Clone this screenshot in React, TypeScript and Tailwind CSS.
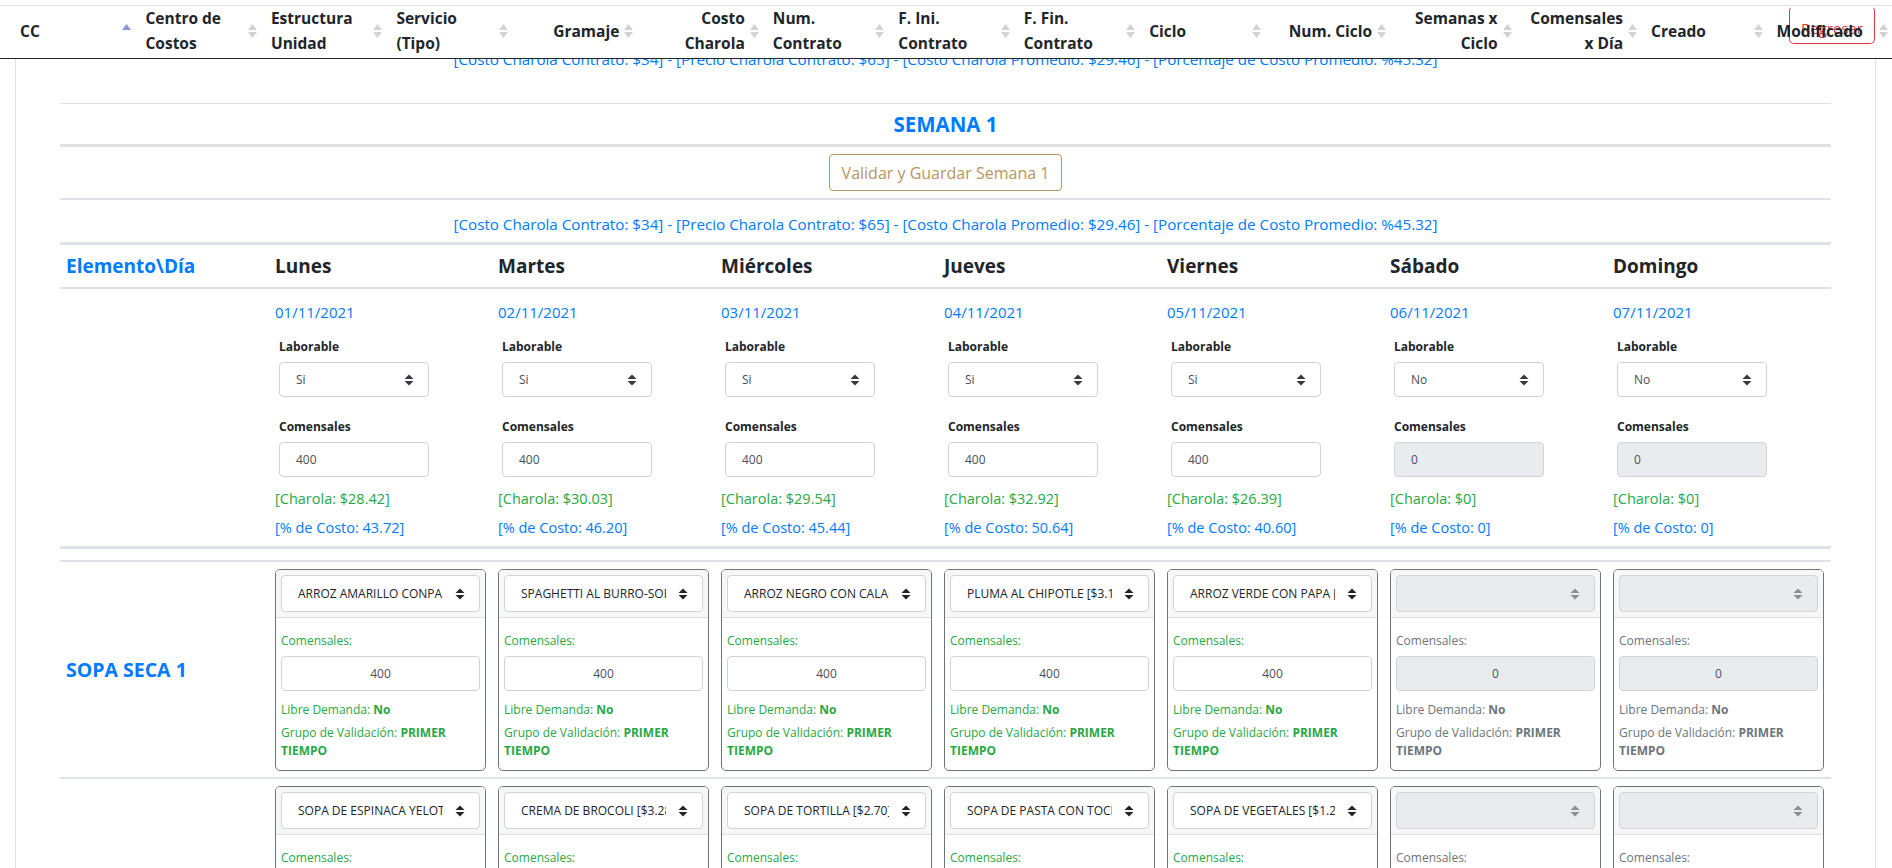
import React from "react";

const STATS =
  "[Costo Charola Contrato: $34] - [Precio Charola Contrato: $65] - [Costo Charola Promedio: $29.46] - [Porcentaje de Costo Promedio: %45.32]";

type Col = { l: string[]; r?: boolean; active?: boolean };
const cols: Col[] = [
  { l: ["CC"], active: true },
  { l: ["Centro de", "Costos"] },
  { l: ["Estructura", "Unidad"] },
  { l: ["Servicio", "(Tipo)"] },
  { l: ["Gramaje"], r: true },
  { l: ["Costo", "Charola"], r: true },
  { l: ["Num.", "Contrato"] },
  { l: ["F. Ini.", "Contrato"] },
  { l: ["F. Fin.", "Contrato"] },
  { l: ["Ciclo"] },
  { l: ["Num. Ciclo"], r: true },
  { l: ["Semanas x", "Ciclo"], r: true },
  { l: ["Comensales", "x Día"], r: true },
  { l: ["Creado"] },
  { l: ["Modificado"] },
];

type Day = {
  name: string;
  date: string;
  lab: string;
  com: string;
  charola: string;
  pct: string;
  on: boolean;
};
const days: Day[] = [
  { name: "Lunes", date: "01/11/2021", lab: "Si", com: "400", charola: "$28.42", pct: "43.72", on: true },
  { name: "Martes", date: "02/11/2021", lab: "Si", com: "400", charola: "$30.03", pct: "46.20", on: true },
  { name: "Miércoles", date: "03/11/2021", lab: "Si", com: "400", charola: "$29.54", pct: "45.44", on: true },
  { name: "Jueves", date: "04/11/2021", lab: "Si", com: "400", charola: "$32.92", pct: "50.64", on: true },
  { name: "Viernes", date: "05/11/2021", lab: "Si", com: "400", charola: "$26.39", pct: "40.60", on: true },
  { name: "Sábado", date: "06/11/2021", lab: "No", com: "0", charola: "$0", pct: "0", on: false },
  { name: "Domingo", date: "07/11/2021", lab: "No", com: "0", charola: "$0", pct: "0", on: false },
];

const row1 = [
  "ARROZ AMARILLO CONPAPA [$2.10]",
  "SPAGHETTI AL BURRO-SOFRITO [$3.00]",
  "ARROZ NEGRO CON CALAMAR [$4.20]",
  "PLUMA AL CHIPOTLE [$3.15]",
  "ARROZ VERDE CON PAPA [$2.45]",
];
const row2 = [
  "SOPA DE ESPINACA YELOTE [$1.90]",
  "CREMA DE BROCOLI [$3.28]",
  "SOPA DE TORTILLA [$2.70]",
  "SOPA DE PASTA CON TOCINO [$2.10]",
  "SOPA DE VEGETALES [$1.24]",
];

function SortIcon({ active }: { active?: boolean }) {
  return (
    <svg
      width="9"
      height="15"
      viewBox="0 0 9 15"
      className="absolute right-[4px] top-1/2 -translate-y-1/2"
    >
      {active ? (
        <path d="M0 6.5 L4.5 0.5 L9 6.5 Z" fill="#8d95da" />
      ) : (
        <>
          <path d="M0 6.5 L4.5 0.5 L9 6.5 Z" fill="#d3d3d3" />
          <path d="M0 8.5 L4.5 14.5 L9 8.5 Z" fill="#d3d3d3" />
        </>
      )}
    </svg>
  );
}

function SelArrow({ color = "#343a40" }: { color?: string }) {
  return (
    <svg width="10" height="12" viewBox="0 0 10 12" className="shrink-0">
      <path d="M0.5 5 L5 0.5 L9.5 5 Z" fill={color} />
      <path d="M0.5 7 L5 11.5 L9.5 7 Z" fill={color} />
    </svg>
  );
}

function Header() {
  return (
    <div className="relative z-10 h-[59px] pt-[5px] bg-white border-b border-[#212529]">
      <div className="absolute left-[1789px] top-[6px] w-[86px] h-[38px] pt-[7px] rounded-[5px] border border-[#dc3545] border-t-transparent flex items-center justify-center text-[#dc3545] text-[15px]">
        Regresar
      </div>
      <div className="border-t border-[#dee2e6]">
        <div className="grid grid-cols-[repeat(15,minmax(0,1fr))] pl-[10px] h-[44px]">
          {cols.map((c, i) => (
            <div
              key={i}
              className={
                "relative flex items-center pl-[10px] pr-[18px] text-[15.5px] leading-[25px] font-bold text-[#212529] " +
                (c.r ? "justify-end text-right" : "justify-start text-left")
              }
            >
              <div className="whitespace-nowrap">
                {c.l.map((t, j) => (
                  <div key={j}>{t}</div>
                ))}
              </div>
              <SortIcon active={c.active} />
            </div>
          ))}
        </div>
      </div>
    </div>
  );
}

function DayCell({ d }: { d: Day }) {
  return (
    <div className="pl-[5px] pt-[12px]">
      <div className="text-[15px] leading-[22px] text-[#007bff]">{d.date}</div>
      <div className="pl-[4px]">
        <div className="mt-[15px] text-[12px] leading-[18px] font-bold text-[#212529]">Laborable</div>
        <div className="mt-[6px] w-[150px] h-[35px] rounded-[4px] border border-[#ced4da] bg-white flex items-center justify-between pl-[16px] pr-[14px] text-[12px] text-[#495057]">
          <span>{d.lab}</span>
          <SelArrow />
        </div>
        <div className="mt-[21px] text-[12px] leading-[18px] font-bold text-[#212529]">Comensales</div>
        <div
          className={
            "mt-[6px] w-[150px] h-[35px] rounded-[4px] border border-[#ced4da] flex items-center pl-[16px] text-[12px] text-[#495057] " +
            (d.on ? "bg-white" : "bg-[#e9ecef]")
          }
        >
          {d.com}
        </div>
      </div>
      <div className="mt-[11px] text-[14.5px] leading-[22px] text-[#28a745]">[Charola: {d.charola}]</div>
      <div className="mt-[7px] text-[14.5px] leading-[22px] text-[#007bff]">[% de Costo: {d.pct}]</div>
    </div>
  );
}

function MenuCard({ text, on }: { text: string; on: boolean }) {
  const c = on ? "text-[#28a745]" : "text-[#6c757d]";
  return (
    <div className="w-[211px] rounded-[5px] border border-[#6c757d] overflow-hidden">
      <div className="h-[48px] bg-[#f7f7f7] border-b border-[#dfdfdf] px-[5px] pt-[5px]">
        <div
          className={
            "h-[37px] rounded-[4px] border border-[#ced4da] flex items-center pl-[16px] pr-[14px] " +
            (on ? "bg-white" : "bg-[#e9ecef]")
          }
        >
          <div className="flex-1 overflow-hidden whitespace-nowrap text-[12px] text-[#212529] mr-[12px]">{on ? text : ""}</div>
          <SelArrow color={on ? "#212529" : "#8a8f94"} />
        </div>
      </div>
      <div className={"px-[5px] pt-[14px] pb-[10px] text-[12px] leading-[18px] " + c}>
        <div>Comensales:</div>
        <div
          className={
            "mt-[6px] h-[35px] rounded-[4px] border border-[#ced4da] flex items-center justify-center text-[12px] text-[#495057] " +
            (on ? "bg-white" : "bg-[#e9ecef]")
          }
        >
          {on ? "400" : "0"}
        </div>
        <div className="mt-[10px]">
          Libre Demanda: <b>No</b>
        </div>
        <div className="mt-[5px]">
          Grupo de Validación: <b>PRIMER TIEMPO</b>
        </div>
      </div>
    </div>
  );
}

function CardRow({ label, items }: { label: string; items: string[] }) {
  return (
    <div className="grid grid-cols-[210px_repeat(7,223px)] border-b-2 border-[#dee2e6] pt-[7px] pb-[6px]">
      <div className="pl-[6px] flex items-center text-[19.5px] font-bold text-[#007bff]">{label}</div>
      {days.map((d, i) => (
        <div key={i} className="pl-[5px]">
          <MenuCard text={items[i] ?? ""} on={d.on} />
        </div>
      ))}
    </div>
  );
}

export default function App() {
  return (
    <div className="w-[1892px] h-[868px] overflow-hidden bg-white font-['Open_Sans','Noto_Sans',sans-serif] text-[#212529]">
      <Header />
      <div className="ml-[15px] w-[1861px] h-[809px] border-x border-[#dee2e6] px-[44px] flex flex-col">
        <div className="h-[45px] shrink-0 border-b border-[#dee2e6] flex flex-col">
          <div className="-mt-[11px] text-center text-[15.2px] leading-[22px] text-[#007bff] whitespace-nowrap">{STATS}</div>
        </div>
        <div className="h-[43px] shrink-0 border-b-[3px] border-[#dee2e6] flex items-center justify-center text-[20.5px] font-bold text-[#007bff]">
          SEMANA 1
        </div>
        <div className="h-[53px] shrink-0 border-b-2 border-[#dee2e6] flex items-center justify-center">
          <div className="h-[37px] px-[12px] rounded-[4px] border border-[#b8955c] text-[#b8955c] text-[16px] flex items-center">
            Validar y Guardar Semana 1
          </div>
        </div>
        <div className="h-[45px] shrink-0 border-b-[3px] border-[#dee2e6] pt-[13px] text-center text-[15.2px] leading-[22px] text-[#007bff] whitespace-nowrap">
          {STATS}
        </div>
        <div className="h-[44px] shrink-0 border-b-2 border-[#dee2e6] grid grid-cols-[210px_repeat(7,223px)] items-center">
          <div className="pl-[6px] text-[19px] font-bold text-[#007bff]">Elemento\Día</div>
          {days.map((d) => (
            <div key={d.name} className="pl-[5px] text-[19px] font-bold text-[#212529]">
              {d.name}
            </div>
          ))}
        </div>
        <div className="h-[260px] shrink-0 border-b-[3px] border-[#dee2e6] grid grid-cols-[210px_repeat(7,223px)]">
          <div />
          {days.map((d) => (
            <DayCell key={d.name} d={d} />
          ))}
        </div>
        <div className="h-[13px] shrink-0 border-b-2 border-[#dee2e6]" />
        <CardRow label="SOPA SECA 1" items={row1} />
        <CardRow label="" items={row2} />
      </div>
    </div>
  );
}
